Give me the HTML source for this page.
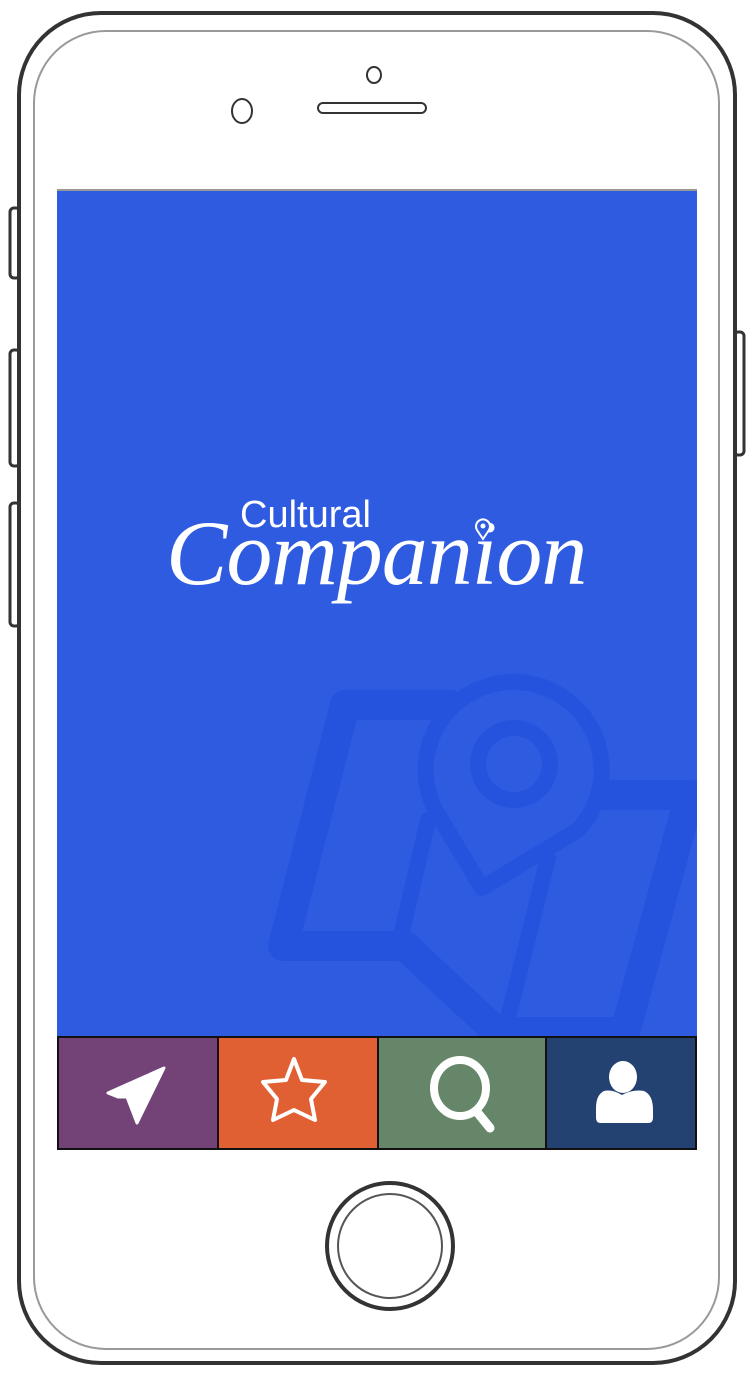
<!DOCTYPE html>
<html><head><style>
body{margin:0;width:754px;height:1381px;background:#fff;position:relative;overflow:hidden;font-family:"Liberation Sans",sans-serif}
.a{position:absolute}
</style></head><body>
<svg class="a" style="left:0;top:0" width="754" height="1381">
<defs><clipPath id="sc"><rect x="57" y="190" width="640" height="846"/></clipPath></defs>
<rect x="10" y="208" width="10" height="70" rx="4" fill="#fff" stroke="#333" stroke-width="3"/>
<rect x="10" y="350" width="10" height="116" rx="4" fill="#fff" stroke="#333" stroke-width="3"/>
<rect x="10" y="503" width="10" height="123" rx="4" fill="#fff" stroke="#333" stroke-width="3"/>
<rect x="734" y="332" width="10" height="123" rx="4" fill="#fff" stroke="#333" stroke-width="3"/>
<rect x="19" y="13" width="716" height="1350" rx="82" fill="#fff" stroke="#333" stroke-width="4"/>
<rect x="34" y="31" width="685" height="1318" rx="72" fill="#fff" stroke="#999" stroke-width="2"/>
<ellipse cx="374" cy="75" rx="7" ry="8" fill="none" stroke="#333" stroke-width="2"/>
<ellipse cx="242" cy="111" rx="10" ry="12" fill="none" stroke="#333" stroke-width="2"/>
<rect x="318" y="103" width="108" height="10" rx="5" fill="none" stroke="#333" stroke-width="2"/>
<circle cx="390" cy="1246" r="63" fill="#fff" stroke="#333" stroke-width="4"/>
<circle cx="390" cy="1246" r="52" fill="#fff" stroke="#555" stroke-width="2"/>
<rect x="57" y="190" width="640" height="846" fill="#2F5BE0"/>
<rect x="57" y="189" width="640" height="2" fill="#999"/>
<g clip-path="url(#sc)" stroke="#2653DD" stroke-linejoin="round" stroke-linecap="round">
<path d="M450 705 L345 705 L283 946 L405 946 L497 1032 L625 1032 L690 795 L580 795" fill="none" stroke-width="30"/>
<path d="M428 820 L400 940" fill="none" stroke-width="16"/>
<path d="M548 858 L505 1030" fill="none" stroke-width="16"/>
<path d="M482 888 L440 818 A88 88 0 1 1 578 830 Z" fill="#2F5BE0" stroke-width="16"/>
<circle cx="514" cy="764" r="36" fill="none" stroke-width="16"/>
</g>
<rect x="58" y="1037" width="160" height="112" fill="#734377" stroke="#111" stroke-width="2"/>
<rect x="218" y="1037" width="160" height="112" fill="#E06034" stroke="#111" stroke-width="2"/>
<rect x="378" y="1037" width="168" height="112" fill="#668669" stroke="#111" stroke-width="2"/>
<rect x="546" y="1037" width="150" height="112" fill="#234272" stroke="#111" stroke-width="2"/>
<path d="M164 1068 L108 1093 L118 1097 L127 1097 L137 1123 Z" fill="#fff" stroke="#fff" stroke-width="3" stroke-linejoin="round"/>
<path d="M294 1059 L302 1080 L325 1082 L311 1099 L315 1120 L294 1110 L273 1120 L277 1099 L263 1082 L286 1080 Z" fill="none" stroke="#fff" stroke-width="4" stroke-linejoin="round"/>
<ellipse cx="460" cy="1088" rx="26" ry="28" fill="none" stroke="#fff" stroke-width="8"/>
<path d="M477 1112 L490 1128" stroke="#fff" stroke-width="9" stroke-linecap="round"/>
<ellipse cx="623" cy="1077" rx="14" ry="16" fill="#fff"/>
<path d="M604 1091 Q612 1089 622 1095 Q633 1089 644 1091 Q653 1095 653 1110 L653 1118 Q653 1123 648 1123 L601 1123 Q596 1123 596 1118 L596 1108 Q596 1095 604 1091 Z" fill="#fff"/>
</svg>
<div class="a" style="left:240px;top:494px;color:#fff;font-size:38px;">Cultural</div>
<div class="a" style="left:166px;top:500px;color:#fff;font-family:'Liberation Serif',serif;font-style:italic;font-size:92px;letter-spacing:-1px">Companion</div>
<svg class="a" style="left:474px;top:518px" width="18" height="24"><path d="M9 21 L3 12 A7 7 0 1 1 15 12 Z" fill="#2F5BE0" stroke="#fff" stroke-width="2"/><circle cx="9" cy="8" r="2.5" fill="#fff"/></svg>
</body></html>
